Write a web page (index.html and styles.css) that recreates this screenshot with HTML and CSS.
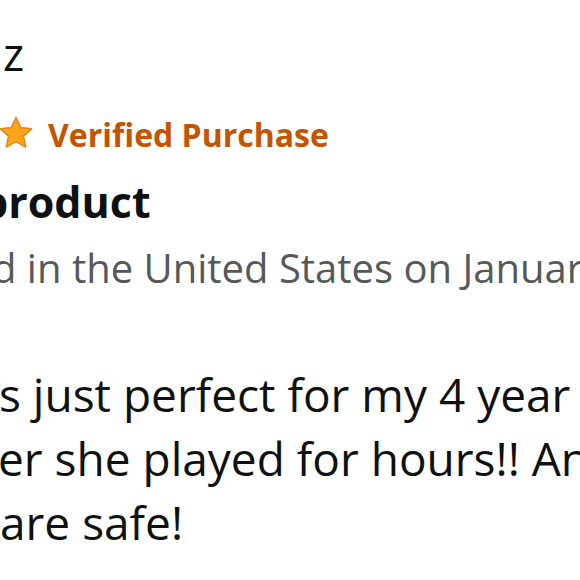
FILE: index.html
```html
<!DOCTYPE html>
<html lang="en">
<head>
<meta charset="utf-8">
<title>Review</title>
<link rel="stylesheet" href="styles.css">
</head>
<body>
<div class="review">
  <div class="name"><span class="cut cut-name">z</span></div>
  <div class="rating">
    <svg class="star" viewBox="0 0 36 36" width="36" height="36" aria-hidden="true">
      <path d="M18 2.5 L22.6 12.6 L33.6 13.8 L25.4 21.2 L27.7 32.1 L18 26.6 L8.3 32.1 L10.6 21.2 L2.4 13.8 L13.4 12.6 Z" fill="#FFA41C" stroke="#E08A12" stroke-width="1.6" stroke-linejoin="round"/>
    </svg>
    <span class="verified">Verified Purchase</span>
  </div>
  <div class="title"><span class="cut cut-title">product</span></div>
  <div class="date"><span class="cut cut-date">d in the United States on January 5, 2020</span></div>
  <div class="body">
    <div class="line"><span class="cut cut-b1">s just perfect for my 4 year</span></div>
    <div class="line"><span class="cut cut-b2">er she played for hours!! And the toys</span></div>
    <div class="line"><span class="cut cut-b3">are safe!</span></div>
  </div>
</div>
</body>
</html>
```

FILE: styles.css
```css
html, body {
  margin: 0;
  padding: 0;
  background: #ffffff;
}

body {
  width: 580px;
  height: 580px;
  overflow: hidden;
  font-family: "Open Sans", "Noto Sans", sans-serif;
  color: #0f1111;
}

.review {
  width: 580px;
  overflow: hidden;
}

.name,
.title,
.date,
.line {
  white-space: nowrap;
  line-height: 64px;
}

.cut {
  display: inline-block;
}

.name {
  font-size: 45px;
  padding-top: 22px;
}

.cut-name { margin-left: 3px; }

.rating {
  display: flex;
  align-items: center;
  gap: 14px;
  margin-top: 27px;
  height: 44px;
}

.star {
  flex: none;
  margin-left: -2px;
  margin-bottom: 4px;
}

.verified {
  font-size: 32px;
  line-height: 44px;
  font-weight: 700;
  color: #c45500;
  white-space: nowrap;
}

.title {
  font-size: 43px;
  font-weight: 700;
  margin-top: 13px;
}

.cut-title { margin-left: -19px; }

.date {
  font-size: 40px;
  color: #565959;
  margin-top: 2px;
}

.cut-date { margin-left: -8px; }

.body {
  margin-top: 62px;
}

.line {
  font-size: 46px;
}

.cut-b1 { margin-left: -1px; }
.cut-b2 { margin-left: -2px; }
.cut-b3 { margin-left: 0; }
```
